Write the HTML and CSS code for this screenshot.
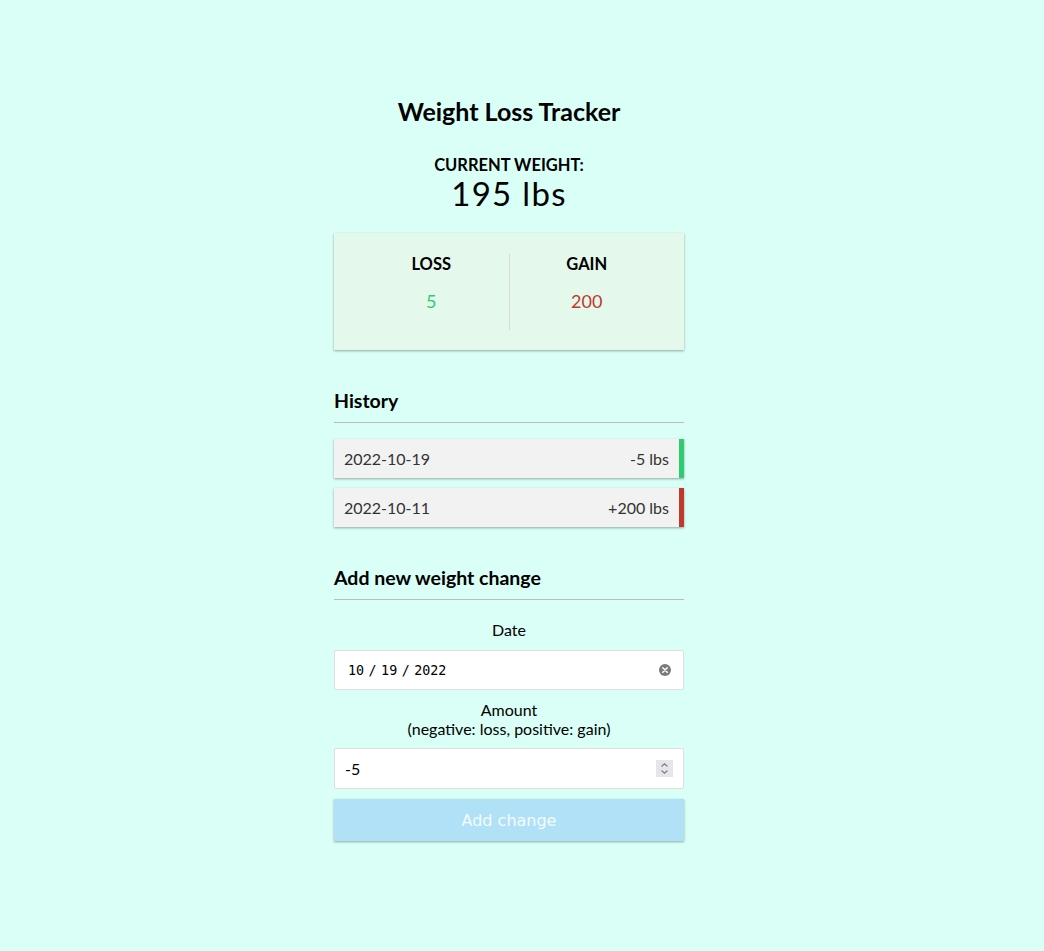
FILE: index.html
```html
<!DOCTYPE html>
<html lang="en">
<head>
<meta charset="utf-8">
<title>Weight Loss Tracker</title>
<link rel="stylesheet" href="styles.css">
</head>
<body>
  <div class="container">
    <h2 class="title">Weight Loss Tracker</h2>
    <h4 class="current-label">Current Weight:</h4>
    <h1 class="current">195 lbs</h1>

    <div class="summary">
      <div class="summary-col">
        <h4>Loss</h4>
        <p class="money plus">5</p>
      </div>
      <div class="summary-col">
        <h4>Gain</h4>
        <p class="money minus">200</p>
      </div>
    </div>

    <h3 class="section">History</h3>
    <ul class="list">
      <li class="plus"><span>2022-10-19</span><span>-5 lbs</span></li>
      <li class="minus"><span>2022-10-11</span><span>+200 lbs</span></li>
    </ul>

    <h3 class="section">Add new weight change</h3>
    <form class="form">
      <div class="form-control">
        <label for="date" class="label-date">Date</label>
        <div class="field">
          <input type="text" id="date" class="input date-input" value="10 / 19 / 2022">
          <svg class="clear-icon" width="12" height="12" viewBox="0 0 12 12" aria-hidden="true">
            <circle cx="6" cy="6" r="6" fill="#7a7a7a"/>
            <path d="M3.8 3.8 L8.2 8.2 M8.2 3.8 L3.8 8.2" stroke="#fff" stroke-width="1.6" stroke-linecap="round"/>
          </svg>
        </div>
      </div>
      <div class="form-control">
        <label for="amount">Amount<br>(negative: loss, positive: gain)</label>
        <div class="field">
          <input type="text" id="amount" class="input num-input" value="-5">
          <svg class="spin-icon" width="17" height="17" viewBox="0 0 17 17" aria-hidden="true">
            <rect x="0" y="0" width="17" height="17" fill="#e6e6ea"/>
            <path d="M5.5 6.5 L8.5 3.8 L11.5 6.5" fill="none" stroke="#7c7c82" stroke-width="1.1"/>
            <path d="M5.5 10.5 L8.5 13.2 L11.5 10.5" fill="none" stroke="#7c7c82" stroke-width="1.1"/>
          </svg>
        </div>
      </div>
      <button type="button" class="btn" disabled>Add change</button>
    </form>
  </div>
</body>
</html>
```
FILE: styles.css
```css
* {
  box-sizing: border-box;
}

body {
  margin: 0;
  padding: 0 26px 0 0;
  background-color: #d9fff6;
  font-family: Lato, "Liberation Sans", sans-serif;
  color: #000;
}

.container {
  width: 350px;
  margin: 97px auto 0;
}

.title {
  margin: 0;
  text-align: center;
  font-size: 25px;
  line-height: 29px;
  font-weight: 700;
}

.current-label {
  margin: 31px 0 0;
  text-align: center;
  text-transform: uppercase;
  font-size: 16.5px;
  line-height: 17px;
}

.current {
  margin: -1px 0 0;
  text-align: center;
  font-size: 33px;
  line-height: 40px;
  font-weight: 400;
  letter-spacing: 1.3px;
}

.summary {
  display: flex;
  background-color: #e4f8ec;
  box-shadow: 0 1px 3px rgba(0, 0, 0, 0.12), 0 1px 2px rgba(0, 0, 0, 0.24);
  padding: 21px 20px 20px;
  margin: 20px 0 20px;
}

.summary-col {
  flex: 1;
  text-align: center;
}

.summary-col:first-child {
  border-right: 1px solid #d6dcd8;
}

.summary-col h4 {
  margin: 0;
  font-size: 16.5px;
  line-height: 20px;
  text-transform: uppercase;
}

.money {
  margin: 16px 0 18px;
  font-size: 18px;
  line-height: 22px;
}

.money.plus {
  color: #2ecc71;
}

.money.minus {
  color: #c0392b;
}

.section {
  margin: 40px 0 10px;
  padding-bottom: 10px;
  border-bottom: 1px solid #bbb;
  font-size: 19.5px;
  line-height: 22px;
}

.list {
  list-style: none;
  padding: 0;
  margin: 16px 0 40px;
}

.list li {
  display: flex;
  justify-content: space-between;
  background-color: #f2f2f2;
  color: #333;
  box-shadow: 0 1px 3px rgba(0, 0, 0, 0.12), 0 1px 2px rgba(0, 0, 0, 0.24);
  padding: 10px;
  margin: 10px 0;
  font-size: 16px;
  line-height: 19px;
}

.list li.plus {
  border-right: 5px solid #2ecc71;
}

.list li.minus {
  border-right: 5px solid #c0392b;
}

.form-control {
  text-align: center;
}

.form-control label {
  display: inline-block;
  margin: 10px 0;
  font-size: 16px;
  line-height: 19px;
}

.form-control .label-date {
  margin-bottom: 11px;
}

.field {
  position: relative;
}

.input {
  display: block;
  width: 100%;
  border: 1px solid #dedede;
  border-radius: 2px;
  background: #fff;
  padding: 0 13px;
  color: #000;
  outline: none;
}

.date-input {
  height: 40px;
  font-family: "DejaVu Sans Mono", monospace;
  font-size: 13.33px;
  word-spacing: -3.5px;
}

.num-input {
  height: 41px;
  padding-left: 10px;
  font-family: Lato, sans-serif;
  font-size: 16px;
}

.clear-icon {
  position: absolute;
  right: 13px;
  top: 14px;
}

.spin-icon {
  position: absolute;
  right: 11px;
  top: 12px;
}

.btn {
  display: block;
  width: 100%;
  height: 42px;
  margin: 10px 0 30px;
  border: 0;
  background-color: #b0e1f7;
  color: #f4fbff;
  font-family: "DejaVu Sans", sans-serif;
  font-size: 16px;
  box-shadow: 0 1px 3px rgba(0, 0, 0, 0.12), 0 1px 2px rgba(0, 0, 0, 0.24);
}
```
